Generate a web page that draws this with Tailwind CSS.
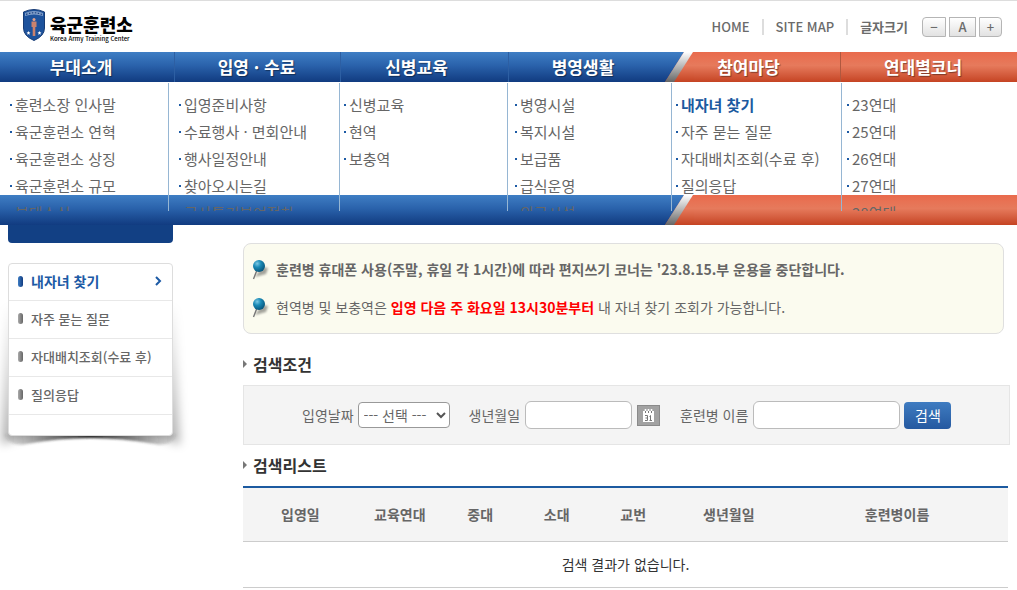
<!DOCTYPE html>
<html lang="ko">

<head>
  <meta charset="UTF-8">
  <meta name="viewport" content="width=device-width, initial-scale=1.0">
  <title>육군훈련소 - 내자녀 찾기</title>
  <script src="https://cdn.jsdelivr.net/npm/@tailwindcss/browser@4"></script>
</head>

<body class="bg-white font-['Noto_Sans_CJK_KR',sans-serif] text-sm text-[#666]">
  <!-- 공통 심볼 -->
  <svg class="absolute size-0">
    <defs>
      <linearGradient id="blue" x1="0" y1="0" x2="0" y2="1">
        <stop offset="0" stop-color="#3f7ec4" />
        <stop offset="0.45" stop-color="#2a62ab" />
        <stop offset="1" stop-color="#113b80" />
      </linearGradient>
      <linearGradient id="orange" x1="0" y1="0" x2="0" y2="1">
        <stop offset="0" stop-color="#e96a4c" />
        <stop offset="0.45" stop-color="#e67a5c" />
        <stop offset="1" stop-color="#c54322" />
      </linearGradient>
      <linearGradient id="silver" x1="0" y1="0" x2="0" y2="1">
        <stop offset="0" stop-color="#ffffff" />
        <stop offset="0.5" stop-color="#b4b4b4" />
        <stop offset="1" stop-color="#666666" />
      </linearGradient>
      <radialGradient id="ball" cx="0.35" cy="0.3" r="0.7">
        <stop offset="0" stop-color="#7cc8e4" />
        <stop offset="0.45" stop-color="#1a8ab6" />
        <stop offset="1" stop-color="#08597f" />
      </radialGradient>
      <filter id="soft" x="-50%" y="-50%" width="200%" height="200%">
        <feGaussianBlur stdDeviation="1.3" />
      </filter>
    </defs>
    <symbol id="slash" viewBox="0 0 30 30">
      <rect width="30" height="30" fill="url(#orange)" />
      <path d="M0 0H20L1 30H0z" fill="url(#blue)" />
      <path d="M20 0H29L10 30H1z" fill="url(#silver)" />
    </symbol>
    <symbol id="pin" viewBox="0 0 18 22">
      <path d="M3 19L10 9L16 10L14 16z" fill="#000" opacity="0.35" filter="url(#soft)" />
      <path d="M1.500 21L5 12" stroke="#777" stroke-width="1.4" />
      <circle cx="7" cy="8" r="6" fill="url(#ball)" />
    </symbol>
  </svg>

  <!-- 상단 헤더 -->
  <header class="flex h-[52px] items-start justify-between border-t border-[#ddd] pl-[22px] pr-[15px]">
    <a href="#" class="mt-2 flex items-start gap-1 text-black">
      <svg class="h-8 w-6" viewBox="0 0 24 32">
        <path d="M1.5 3Q7 .5 12 .5T22.500 3V19Q22.500 27 12 31.500Q1.500 27 1.500 19z" fill="#1d529c" stroke="#173b74" />
        <path d="M3 4Q12 0 21 4V7Q12 4 3 7z" fill="#7f9dc8" />
        <path d="M4 5.500Q12 2 20 5.500" fill="none" stroke="#1b4280" stroke-width="1.200" stroke-dasharray="1.500 1.500" />
        <circle cx="12" cy="10.500" r="1.500" fill="#e3a28c" />
        <path d="M9.500 12.500H14.500V18H13.300V27H10.700V18H9.500z" fill="#c9826e" />
        <path d="M6.500 22l.6 1.300 1.400.1-1.100.9.4 1.400-1.300-.7-1.300.7.4-1.400-1.100-.9 1.400-.1zM17.500 22l.6 1.300 1.400.1-1.100.9.4 1.400-1.300-.7-1.300.7.4-1.400-1.100-.9 1.400-.1z" fill="#fff" />
      </svg>
      <span class="flex flex-col gap-0.5 pt-1.5">
        <span class="text-[18px]/[18px] font-black">육군훈련소</span>
        <span class="text-[6px]/[8px] font-medium">Korea Army Training Center</span>
      </span>
    </a>
    <div class="mt-4 flex items-center text-[13px]/[20px] font-medium text-[#6b6b6b]">
      <a href="#">HOME</a>
      <span class="mx-3 h-4 w-0.5 bg-[#ddd]"></span>
      <a href="#">SITE MAP</a>
      <span class="mx-3 h-4 w-0.5 bg-[#ddd]"></span>
      <span class="font-bold">글자크기</span>
      <div class="ml-3.5 flex gap-[3px] text-[13px]/[16px]">
        <button type="button" aria-label="글자 작게" class="h-5 w-6 rounded-l border border-[#b5b5b5] bg-linear-to-b from-white to-[#e2e2e2]">−</button>
        <button type="button" aria-label="글자 기본" class="h-5 w-[27px] border border-[#b5b5b5] bg-linear-to-b from-white to-[#e2e2e2]">A</button>
        <button type="button" aria-label="글자 크게" class="h-5 w-[23px] rounded-r border border-[#b5b5b5] bg-linear-to-b from-white to-[#e2e2e2]">+</button>
      </div>
    </div>
  </header>

  <!-- 메인 메뉴 -->
  <nav>
    <div class="relative h-[30px]">
      <div class="absolute inset-0 flex">
        <div class="flex-[664] bg-linear-to-b from-[#3f7ec4] via-[#2a62ab] via-45% to-[#113b80]"></div>
        <svg class="h-[30px] w-[30px]"><use href="#slash" /></svg>
        <div class="flex-[323] bg-linear-to-b from-[#e96a4c] via-[#e67a5c] via-45% to-[#c54322]"></div>
      </div>
      <ul class="relative grid h-full grid-cols-[175fr_166fr_168fr_164fr_168fr_176fr] text-center text-[17px]/[29px] font-bold text-white text-shadow-[1px_1px_1px_rgb(0_0_0/0.4)]">
        <li class="border-r border-[#2d5fa3] pr-3"><a href="#">부대소개</a></li>
        <li class="border-r border-[#2d5fa3] pr-0.5"><a href="#">입영 · 수료</a></li>
        <li class="border-r border-[#2d5fa3] pr-4"><a href="#">신병교육</a></li>
        <li class="pr-4"><a href="#">병영생활</a></li>
        <li class="border-r border-[#b0583f] pr-4"><a href="#">참여마당</a></li>
        <li class="pr-3"><a href="#">연대별코너</a></li>
      </ul>
    </div>

    <!-- 펼침 메뉴 -->
    <div class="relative h-[143px]">
      <div class="absolute inset-x-0 bottom-0 flex">
        <div class="flex-[664] bg-linear-to-b from-[#3f7ec4] via-[#2a62ab] via-45% to-[#113b80]"></div>
        <svg class="h-[30px] w-[30px]"><use href="#slash" /></svg>
        <div class="flex-[323] bg-linear-to-b from-[#e96a4c] via-[#e67a5c] via-45% to-[#c54322]"></div>
      </div>
      <div class="relative grid h-[129px] grid-cols-[169fr_171fr_168fr_164fr_170fr_175fr] overflow-hidden pt-px text-[15px]/[27px]">
        <ul class="border-r border-[#96b6d3] pl-2.5 pt-2">
          <li class="flex items-center gap-[3px] before:size-0.5 before:bg-[#1c5aa5]"><a href="#">훈련소장 인사말</a></li>
          <li class="flex items-center gap-[3px] before:size-0.5 before:bg-[#1c5aa5]"><a href="#">육군훈련소 연혁</a></li>
          <li class="flex items-center gap-[3px] before:size-0.5 before:bg-[#1c5aa5]"><a href="#">육군훈련소 상징</a></li>
          <li class="flex items-center gap-[3px] before:size-0.5 before:bg-[#1c5aa5]"><a href="#">육군훈련소 규모</a></li>
          <li class="flex items-center gap-[3px]"><a href="#" class="pl-[5px]">부대소식</a></li>
        </ul>
        <ul class="border-r border-[#96b6d3] pl-2.5 pt-2">
          <li class="flex items-center gap-[3px] before:size-0.5 before:bg-[#1c5aa5]"><a href="#">입영준비사항</a></li>
          <li class="flex items-center gap-[3px] before:size-0.5 before:bg-[#1c5aa5]"><a href="#">수료행사 · 면회안내</a></li>
          <li class="flex items-center gap-[3px] before:size-0.5 before:bg-[#1c5aa5]"><a href="#">행사일정안내</a></li>
          <li class="flex items-center gap-[3px] before:size-0.5 before:bg-[#1c5aa5]"><a href="#">찾아오시는길</a></li>
          <li class="flex items-center gap-[3px]"><a href="#" class="pl-[5px]">군사특기분여절차</a></li>
        </ul>
        <ul class="border-r border-[#96b6d3] pl-1 pt-2">
          <li class="flex items-center gap-[3px] before:size-0.5 before:bg-[#1c5aa5]"><a href="#">신병교육</a></li>
          <li class="flex items-center gap-[3px] before:size-0.5 before:bg-[#1c5aa5]"><a href="#">현역</a></li>
          <li class="flex items-center gap-[3px] before:size-0.5 before:bg-[#1c5aa5]"><a href="#">보충역</a></li>
        </ul>
        <ul class="border-r border-[#96b6d3] pl-[7px] pt-2">
          <li class="flex items-center gap-[3px] before:size-0.5 before:bg-[#1c5aa5]"><a href="#">병영시설</a></li>
          <li class="flex items-center gap-[3px] before:size-0.5 before:bg-[#1c5aa5]"><a href="#">복지시설</a></li>
          <li class="flex items-center gap-[3px] before:size-0.5 before:bg-[#1c5aa5]"><a href="#">보급품</a></li>
          <li class="flex items-center gap-[3px] before:size-0.5 before:bg-[#1c5aa5]"><a href="#">급식운영</a></li>
          <li class="flex items-center gap-[3px]"><a href="#" class="pl-[5px]">의료시설</a></li>
        </ul>
        <ul class="border-r border-[#96b6d3] pl-1 pt-2">
          <li class="flex items-center gap-[3px] before:size-0.5 before:bg-[#1c5aa5]"><a href="#" class="font-bold text-[#1c5aa0]">내자녀 찾기</a></li>
          <li class="flex items-center gap-[3px] before:size-0.5 before:bg-[#1c5aa5]"><a href="#">자주 묻는 질문</a></li>
          <li class="flex items-center gap-[3px] before:size-0.5 before:bg-[#1c5aa5]"><a href="#">자대배치조회(수료 후)</a></li>
          <li class="flex items-center gap-[3px] before:size-0.5 before:bg-[#1c5aa5]"><a href="#">질의응답</a></li>
        </ul>
        <ul class="pl-[5px] pt-2">
          <li class="flex items-center gap-[3px] before:size-0.5 before:bg-[#1c5aa5]"><a href="#">23연대</a></li>
          <li class="flex items-center gap-[3px] before:size-0.5 before:bg-[#1c5aa5]"><a href="#">25연대</a></li>
          <li class="flex items-center gap-[3px] before:size-0.5 before:bg-[#1c5aa5]"><a href="#">26연대</a></li>
          <li class="flex items-center gap-[3px] before:size-0.5 before:bg-[#1c5aa5]"><a href="#">27연대</a></li>
          <li class="flex items-center gap-[3px]"><a href="#" class="pl-[5px]">28연대</a></li>
        </ul>
      </div>
    </div>
  </nav>

  <div class="flex items-start gap-[70px] pl-2 pr-[9px]">
    <!-- 왼쪽 메뉴 -->
    <aside class="w-[165px] shrink-0">
      <div class="h-[18px] rounded-b bg-[#124084]"></div>
      <div class="relative mt-5">
        <svg class="absolute -left-2 top-8 h-[170px] w-[195px]" viewBox="0 0 195 170">
          <defs>
            <linearGradient id="side" x1="0" y1="0" x2="0" y2="1">
              <stop offset="0" stop-color="#000" stop-opacity="0.02" />
              <stop offset="1" stop-color="#000" stop-opacity="0.3" />
            </linearGradient>
            <linearGradient id="under" x1="0" y1="0" x2="1" y2="0">
              <stop offset="0" stop-color="#333" stop-opacity="0.05" />
              <stop offset="0.25" stop-color="#333" stop-opacity="0.6" />
              <stop offset="0.5" stop-color="#222" />
              <stop offset="0.75" stop-color="#333" stop-opacity="0.6" />
              <stop offset="1" stop-color="#333" stop-opacity="0.05" />
            </linearGradient>
            <filter id="blur" x="-20%" y="-20%" width="140%" height="140%">
              <feGaussianBlur stdDeviation="5" />
            </filter>
            <filter id="thin" x="-20%" y="-60%" width="140%" height="220%">
              <feGaussianBlur stdDeviation="1" />
            </filter>
          </defs>
          <path d="M6 12H175L180 150Q150 136 90 136T1 150z" fill="url(#side)" filter="url(#blur)" />
          <path d="M4 139H177Q172 152 155 149Q90 137 26 149Q9 152 4 139z" fill="url(#under)" filter="url(#thin)" />
        </svg>
        <ul class="relative rounded border border-[#ddd] bg-white pb-5 text-[13px]/[35px] font-medium">
          <li class="flex items-center border-b border-[#e8e8e8] pb-0.5 pl-[9px] pr-2.5 text-sm/[34px] font-bold text-[#1c5aa5]">
            <span class="mr-2 h-[11px] w-[5px] rounded-full bg-linear-to-r from-[#3f7ec4] to-[#113b80]"></span>
            <a href="#" class="grow">내자녀 찾기</a>
            <svg class="h-2.5 w-[7px]" viewBox="0 0 7 10" fill="none" stroke="currentColor" stroke-width="2"><path d="M1 1l4 4-4 4" /></svg>
          </li>
          <li class="flex items-center border-b border-[#e8e8e8] pb-0.5 pl-[9px]"><span class="mr-2 h-[11px] w-[5px] rounded-full bg-linear-to-r from-[#aaa] to-[#666]"></span><a href="#">자주 묻는 질문</a></li>
          <li class="flex items-center border-b border-[#e8e8e8] pb-0.5 pl-[9px]"><span class="mr-2 h-[11px] w-[5px] rounded-full bg-linear-to-r from-[#aaa] to-[#666]"></span><a href="#">자대배치조회(수료 후)</a></li>
          <li class="flex items-center border-b border-[#e8e8e8] pb-0.5 pl-[9px]"><span class="mr-2 h-[11px] w-[5px] rounded-full bg-linear-to-r from-[#aaa] to-[#666]"></span><a href="#">질의응답</a></li>
        </ul>
      </div>
    </aside>

    <!-- 본문 -->
    <main class="min-w-0 grow pt-[18px]">
      <div class="mr-1 rounded-lg border border-[#dfdfdf] bg-[#fbfbef] px-2 pb-[7px] pt-1.5">
        <p class="flex items-center gap-1.5 text-sm/[38px] font-bold"><svg class="h-[22px] w-[18px]"><use href="#pin" /></svg>훈련병 휴대폰 사용(주말, 휴일 각 1시간)에 따라 편지쓰기 코너는 '23.8.15.부 운용을 중단합니다.</p>
        <p class="flex items-center gap-1.5 text-sm/[38px]"><svg class="h-[22px] w-[18px]"><use href="#pin" /></svg><span>현역병 및 보충역은 <strong class="font-bold text-[#f00]">입영 다음 주 화요일 13시30분부터</strong> 내 자녀 찾기 조회가 가능합니다.</span></p>
      </div>

      <h2 class="mt-[18px] flex items-center gap-1.5 text-base/6 font-bold text-[#333]">
        <svg class="h-2 w-1" viewBox="0 0 4 8"><path d="M0 0L4 4L0 8z" fill="#777" /></svg>검색조건
      </h2>
      <form class="-mr-0.5 mt-[9px] flex h-[60px] items-center border border-[#e5e5e5] bg-[#f4f4f4] pl-[58px]">
        <label for="enterDate">입영날짜</label>
        <div class="relative ml-1 mr-[19px]">
          <select id="enterDate" class="h-[26px] w-[92px] appearance-none rounded border border-[#999] bg-white pl-[5px] text-sm/[20px]">
            <option>--- 선택 ---</option>
          </select>
          <svg class="pointer-events-none absolute right-1 top-2.5 h-[7px] w-2.5" viewBox="0 0 10 7" fill="none" stroke="#555" stroke-width="2"><path d="M1 1l4 4 4-4" /></svg>
        </div>
        <label for="birth">생년월일</label>
        <input id="birth" type="text" class="ml-[5px] h-7 w-[107px] rounded-md border border-[#bbb] bg-white px-2">
        <button type="button" aria-label="달력" class="ml-[5px] mr-5">
          <svg class="h-[21px] w-[23px]" viewBox="0 0 23 21">
            <rect x="0.5" y="0.5" width="22" height="20" fill="#a2a2a2" stroke="#8a8a8a" />
            <path d="M6 6H17V17H6z" fill="#fff" />
            <path d="M8.500 4V8M11.500 4V8M14.500 4V8" stroke="#fff" stroke-width="1.600" />
            <path d="M8.500 6V8M11.500 6V8M14.500 6V8" stroke="#777" />
            <path d="M8 10.500H10.500V15.500H8M8.500 13H10.500M12.500 11.500L13.500 10.500V15.500M12.500 15.500H15" fill="none" stroke="#777" />
          </svg>
        </button>
        <label for="name">훈련병 이름</label>
        <input id="name" type="text" class="ml-[5px] h-7 w-[147px] rounded-md border border-[#bbb] bg-white px-2">
        <button type="submit" class="ml-1 h-[27px] w-[47px] rounded bg-linear-to-b from-[#3f7cc1] to-[#2559a0] text-sm text-white">검색</button>
      </form>

      <h2 class="mt-2 flex items-center gap-1.5 text-base/6 font-bold text-[#333]">
        <svg class="h-2 w-1" viewBox="0 0 4 8"><path d="M0 0L4 4L0 8z" fill="#777" /></svg>검색리스트
      </h2>
      <table class="mt-[9px] w-full table-fixed border-t-2 border-[#1c5aa0] text-center">
        <thead class="bg-[#f4f4f4]">
          <tr class="h-[54px] border-b border-[#ccc]">
            <th class="w-[15%] font-bold">입영일</th>
            <th class="w-[11%] font-bold">교육연대</th>
            <th class="w-[10%] font-bold">중대</th>
            <th class="w-[10%] font-bold">소대</th>
            <th class="w-[10%] font-bold">교번</th>
            <th class="w-[15%] font-bold">생년월일</th>
            <th class="w-[29%] font-bold">훈련병이름</th>
          </tr>
        </thead>
        <tbody>
          <tr class="h-[46px] border-b border-[#ccc] text-[#333]">
            <td colspan="7">검색 결과가 없습니다.</td>
          </tr>
        </tbody>
      </table>
    </main>
  </div>
</body>

</html>
